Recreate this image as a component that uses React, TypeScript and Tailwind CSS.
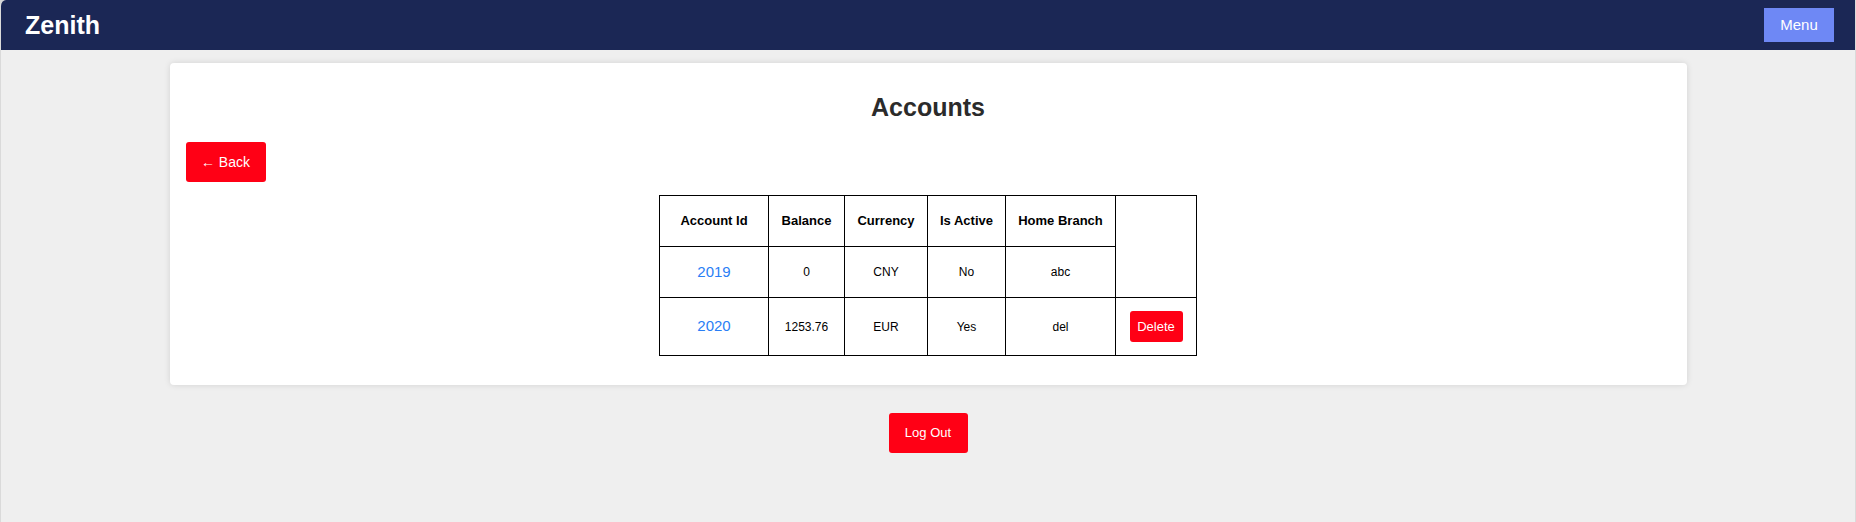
import React from "react"

const accounts = [
  { id: "2019", balance: "0", currency: "CNY", active: "No", branch: "abc", canDelete: false },
  { id: "2020", balance: "1253.76", currency: "EUR", active: "Yes", branch: "del", canDelete: true },
]

export default function App() {
  const font = { fontFamily: '"Liberation Sans", Arial, sans-serif' }

  return (
    <div className="w-[1856px] h-[522px] bg-[#d6d6d6]" style={font}>
      <div className="h-full bg-[#efefef] rounded-tl-[6px] overflow-hidden border-x border-[#dadada]">
        {/* Header */}
        <header className="h-[50px] bg-[#1b2755] flex items-center justify-between pl-[24px] pr-[21px]">
          <span className="text-white text-[25px] font-bold leading-none">Zenith</span>
          <button className="w-[70px] h-[34px] bg-[#6e88f5] text-white text-[15px]">Menu</button>
        </header>

        {/* Card */}
        <div className="mx-auto mt-[13px] w-[1517px] bg-white rounded-[4px] shadow-[0_0_6px_rgba(0,0,0,0.12)] px-[16px] pt-[29px] pb-[29px]">
          <h2 className="text-center text-[25px] font-bold text-[#2b2b2b] leading-[30px]">Accounts</h2>

          <button className="mt-[20px] w-[80px] h-[40px] bg-[#ff0015] text-white text-[14px] rounded-[3px]">
            ← Back
          </button>

          <div className="flex justify-center mt-[13px]">
            <table className="table-fixed w-[537px] border-collapse border border-black text-[12px] text-black text-center">
              <colgroup>
                <col className="w-[109px]" />
                <col className="w-[76px]" />
                <col className="w-[83px]" />
                <col className="w-[78px]" />
                <col className="w-[110px]" />
                <col className="w-[81px]" />
              </colgroup>
              <thead>
                <tr className="h-[51px]">
                  <th className="border border-black font-bold text-[13px]">Account Id</th>
                  <th className="border border-black font-bold text-[13px]">Balance</th>
                  <th className="border border-black font-bold text-[13px]">Currency</th>
                  <th className="border border-black font-bold text-[13px]">Is Active</th>
                  <th className="border border-black font-bold text-[13px]">Home Branch</th>
                </tr>
              </thead>
              <tbody>
                {accounts.map((a) =>
                  a.canDelete ? (
                    <tr key={a.id} className="h-[58px]">
                      <td className="border border-black">
                        <a className="text-[15px] text-[#2a7ef5]">{a.id}</a>
                      </td>
                      <td className="border border-black">{a.balance}</td>
                      <td className="border border-black">{a.currency}</td>
                      <td className="border border-black">{a.active}</td>
                      <td className="border border-black">{a.branch}</td>
                      <td className="border border-black">
                        <button className="w-[53px] h-[31px] bg-[#ff0015] text-white text-[13px] rounded-[3px] align-middle">
                          Delete
                        </button>
                      </td>
                    </tr>
                  ) : (
                    <tr key={a.id} className="h-[51px]">
                      <td className="border border-black">
                        <a className="text-[15px] text-[#2a7ef5]">{a.id}</a>
                      </td>
                      <td className="border border-black">{a.balance}</td>
                      <td className="border border-black">{a.currency}</td>
                      <td className="border border-black">{a.active}</td>
                      <td className="border border-black">{a.branch}</td>
                    </tr>
                  )
                )}
              </tbody>
            </table>
          </div>
        </div>

        <div className="flex justify-center mt-[28px]">
          <button className="w-[79px] h-[40px] bg-[#ff0015] text-white text-[13px] rounded-[3px]">Log Out</button>
        </div>
      </div>
    </div>
  )
}
